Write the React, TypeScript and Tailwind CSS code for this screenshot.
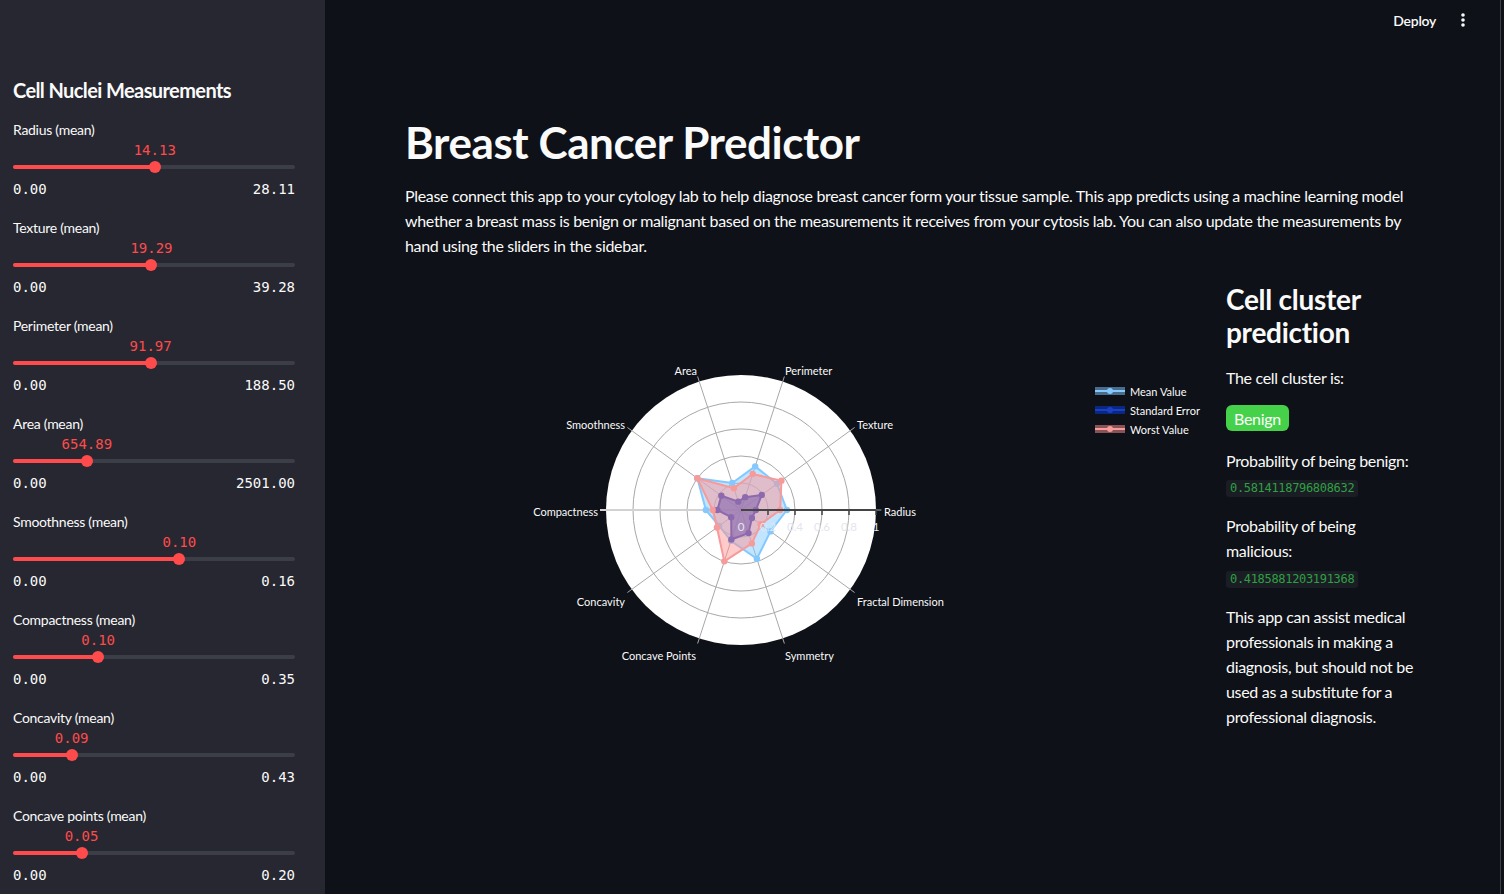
import React from "react";

const sliders = [
  { label: "Radius (mean)", value: "14.13", min: "0.00", max: "28.11", pct: 0.5027 },
  { label: "Texture (mean)", value: "19.29", min: "0.00", max: "39.28", pct: 0.491 },
  { label: "Perimeter (mean)", value: "91.97", min: "0.00", max: "188.50", pct: 0.488 },
  { label: "Area (mean)", value: "654.89", min: "0.00", max: "2501.00", pct: 0.2618 },
  { label: "Smoothness (mean)", value: "0.10", min: "0.00", max: "0.16", pct: 0.59 },
  { label: "Compactness (mean)", value: "0.10", min: "0.00", max: "0.35", pct: 0.302 },
  { label: "Concavity (mean)", value: "0.09", min: "0.00", max: "0.43", pct: 0.208 },
  { label: "Concave points (mean)", value: "0.05", min: "0.00", max: "0.20", pct: 0.243 },
];

// radar geometry (svg coords)
const CX = 336;
const CY = 227;
const R = 135;

const pt = (v: number, i: number) => {
  const a = (i * 36 * Math.PI) / 180;
  return [CX + v * R * Math.cos(a), CY - v * R * Math.sin(a)];
};

const traces = [
  {
    name: "Mean Value",
    vals: [0.34, 0.33, 0.34, 0.21, 0.4, 0.26, 0.2, 0.24, 0.38, 0.27],
    line: "#83c9ff",
    fill: "rgba(131,201,255,0.5)",
  },
  {
    name: "Standard Error",
    vals: [0.11, 0.19, 0.1, 0.065, 0.18, 0.175, 0.09, 0.23, 0.18, 0.1],
    line: "#1a3fc4",
    fill: "rgba(10,56,200,0.6)",
  },
  {
    name: "Worst Value",
    vals: [0.29, 0.37, 0.28, 0.17, 0.4, 0.21, 0.22, 0.4, 0.26, 0.18],
    line: "#f79a9a",
    fill: "rgba(255,150,150,0.5)",
  },
];

const axisLabels: { t: string; x: number; y: number; a: "start" | "middle" | "end" }[] = [
  { t: "Radius", x: 479, y: 228, a: "start" },
  { t: "Texture", x: 452, y: 141, a: "start" },
  { t: "Perimeter", x: 380, y: 87, a: "start" },
  { t: "Area", x: 292, y: 87, a: "end" },
  { t: "Smoothness", x: 220, y: 141, a: "end" },
  { t: "Compactness", x: 193, y: 228, a: "end" },
  { t: "Concavity", x: 220, y: 318, a: "end" },
  { t: "Concave Points", x: 291, y: 372, a: "end" },
  { t: "Symmetry", x: 380, y: 372, a: "start" },
  { t: "Fractal Dimension", x: 452, y: 318, a: "start" },
];

function Slider({ s }: { s: (typeof sliders)[number] }) {
  return (
    <div className="mb-[19px]">
      <div className="h-5 text-[14px] leading-5 tracking-[-0.02em] text-[#fafafa]">{s.label}</div>
      <div className="relative h-5">
        <span
          className="absolute -translate-x-1/2 font-['DejaVu_Sans_Mono',monospace] text-[14px] leading-5 text-[#ff4b4b]"
          style={{ left: `${s.pct * 100}%` }}
        >
          {s.value}
        </span>
      </div>
      <div className="relative h-[14px]">
        <div className="absolute top-[5px] h-1 w-full rounded-full bg-[#3c3e47]" />
        <div
          className="absolute top-[5px] h-1 rounded-full bg-[#ff4b4b]"
          style={{ width: `${s.pct * 100}%` }}
        />
        <div
          className="absolute top-[1px] h-3 w-3 -translate-x-1/2 rounded-full bg-[#ff4b4b]"
          style={{ left: `${s.pct * 100}%` }}
        />
      </div>
      <div className="mt-[5px] flex h-5 justify-between font-['DejaVu_Sans_Mono',monospace] text-[14px] leading-5 text-[#fafafa]">
        <span>{s.min}</span>
        <span>{s.max}</span>
      </div>
    </div>
  );
}

function Radar() {
  return (
    <svg width="805" height="420" className="block">
      <circle cx={CX} cy={CY} r={R} fill="#ffffff" />
      {[0.2, 0.4, 0.6, 0.8].map((g) => (
        <circle key={g} cx={CX} cy={CY} r={g * R} fill="none" stroke="#a8a8a8" strokeWidth="1" />
      ))}
      {axisLabels.map((_, i) => {
        const [x, y] = pt(1.04, i);
        return <line key={i} x1={CX} y1={CY} x2={x} y2={y} stroke="#a8a8a8" strokeWidth="1" />;
      })}
      <line x1={CX - R - 6} y1={CY} x2={CX} y2={CY} stroke="#d2d2d2" strokeWidth="2" />

      {traces.map((t) => (
        <g key={t.name}>
          <polygon
            points={t.vals.map((v, i) => pt(v, i).join(",")).join(" ")}
            fill={t.fill}
            stroke={t.line}
            strokeWidth="2"
            strokeLinejoin="round"
          />
          {t.vals.map((v, i) => {
            const [x, y] = pt(v, i);
            return <circle key={i} cx={x} cy={y} r="3.2" fill={t.line} />;
          })}
        </g>
      ))}

      {/* radial axis */}
      <line x1={CX} y1={CY} x2={CX + R} y2={CY} stroke="#444444" strokeWidth="2" />
      {[0.2, 0.4, 0.6, 0.8, 1].map((g) => (
        <line key={g} x1={CX + g * R} y1={CY} x2={CX + g * R} y2={CY + 5} stroke="#444444" strokeWidth="1.5" />
      ))}
      {["0", "0.2", "0.4", "0.6", "0.8", "1"].map((l, i) => (
        <text
          key={l}
          x={CX + i * 0.2 * R}
          y={CY + 16}
          textAnchor="middle"
          dominantBaseline="central"
          fontSize="11.5"
          fill="#e3e5ef"
        >
          {l}
        </text>
      ))}

      {axisLabels.map((l) => (
        <text key={l.t} x={l.x} y={l.y} textAnchor={l.a} dominantBaseline="central" fontSize="11" fill="#fafafa">
          {l.t}
        </text>
      ))}

      {/* legend */}
      {traces.map((t, i) => {
        const y = 108 + i * 19;
        return (
          <g key={t.name}>
            <rect x="690" y={y - 4} width="30" height="8" fill={t.fill} />
            <line x1="690" y1={y} x2="720" y2={y} stroke={t.line} strokeWidth="2" />
            <circle cx="705" cy={y} r="3" fill={t.line} />
            <text x="725" y={y} dominantBaseline="central" fontSize="11" fill="#fafafa">
              {t.name}
            </text>
          </g>
        );
      })}
    </svg>
  );
}

function Code({ children }: { children: React.ReactNode }) {
  return (
    <span className="inline-flex h-[17px] items-center rounded-[3px] bg-[#1b1d24] px-[4px] font-['DejaVu_Sans_Mono',monospace] text-[12px] text-[#2ea043]">
      {children}
    </span>
  );
}

export default function App() {
  return (
    <div className="flex h-[894px] w-[1504px] overflow-hidden bg-[#0e1117] font-['Lato','Noto_Sans',sans-serif] text-[#fafafa]">
      {/* sidebar */}
      <aside className="w-[325px] shrink-0 bg-[#262730] pl-[13px] pt-[76px]">
        <div className="w-[282px]">
          <h2 className="mb-4 text-[20px] font-bold leading-[28px] tracking-[-0.03em]">Cell Nuclei Measurements</h2>
          {sliders.map((s) => (
            <Slider key={s.label} s={s} />
          ))}
        </div>
      </aside>

      {/* main */}
      <main className="flex-1">
        <header className="flex h-10 items-center justify-end gap-[24px] pr-[34px]">
          <span className="text-[14px] font-semibold tracking-[-0.02em]">Deploy</span>
          <svg width="6" height="16" viewBox="0 0 6 16">
            <circle cx="3" cy="3" r="1.8" fill="#fafafa" />
            <circle cx="3" cy="8" r="1.8" fill="#fafafa" />
            <circle cx="3" cy="13" r="1.8" fill="#fafafa" />
          </svg>
        </header>

        <div className="px-20 pt-[76px]">
          <h1 className="text-[44px] font-bold leading-[53px] tracking-[-0.01em]">Breast Cancer Predictor</h1>
          <p className="mt-[14px] text-[16px] leading-[25px] tracking-[-0.02em]">
            Please connect this app to your cytology lab to help diagnose breast cancer form your tissue sample. This app
            predicts using a machine learning model whether a breast mass is benign or malignant based on the measurements
            it receives from your cytosis lab. You can also update the measurements by hand using the sliders in the
            sidebar.
          </p>

          <div className="mt-[25px] flex gap-4">
            <div className="w-[805px] shrink-0">
              <Radar />
            </div>
            <div className="flex-1 text-[16px] leading-[25px] tracking-[-0.02em]">
              <h3 className="text-[28px] font-bold leading-[33px] tracking-[-0.01em]">Cell cluster prediction</h3>
              <p className="mt-[16px]">The cell cluster is:</p>
              <div className="mt-[15px] inline-flex h-[26px] items-center rounded-[6px] bg-[#45d24a] px-2 text-white">
                Benign
              </div>
              <p className="mt-[17px]">Probability of being benign:</p>
              <div>
                <Code>0.5814118796808632</Code>
              </div>
              <p className="mt-[15px]">Probability of being malicious:</p>
              <div className="mt-[1px]">
                <Code>0.4185881203191368</Code>
              </div>
              <p className="mt-[15px]">
                This app can assist medical professionals in making a diagnosis, but should not be used as a substitute
                for a professional diagnosis.
              </p>
            </div>
          </div>
        </div>
      </main>
      <div className="w-[4px] shrink-0 border-l border-[#3d3f47] bg-[#0e1117]" />
    </div>
  );
}
